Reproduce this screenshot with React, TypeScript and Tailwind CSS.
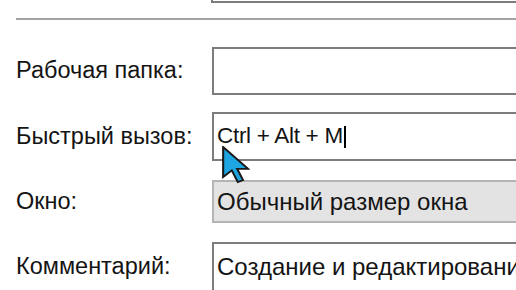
import React from 'react';

const font = { fontFamily: '"Liberation Sans", Arial, sans-serif' };

const Row: React.FC<{ label: string; mt: string; h: string; muted?: boolean; children?: React.ReactNode }> = ({
  label,
  mt,
  h,
  muted,
  children,
}) => (
  <div className={`flex items-center ${mt}`}>
    <div className="w-[212px] shrink-0 pl-[16px] text-[23.5px] text-[#141414] leading-none">{label}</div>
    <div
      className={`${h} w-[340px] shrink-0 border-2 flex items-center pl-[3px] text-[24px] text-[#141414] whitespace-nowrap overflow-hidden leading-none ${
        muted ? 'bg-[#e3e3e3] border-[#b4b4b4]' : 'bg-white border-[#7d7d7d]'
      }`}
    >
      {children}
    </div>
  </div>
);

const Cursor = () => (
  <svg
    className="absolute left-[222px] top-[146px]"
    width="28"
    height="38"
    viewBox="0 0 12 19"
    preserveAspectRatio="none"
  >
    <path
      d="M0.5 0.5 L0.5 15.5 L4.2 12.2 L6.8 18 L9 17 L6.5 11.4 L11.2 11.4 Z"
      fill="#1ea6e3"
      stroke="#1a1a1a"
      strokeWidth="0.9"
      strokeLinejoin="miter"
    />
  </svg>
);

export default function App() {
  return (
    <div className="relative w-[516px] h-[290px] overflow-hidden bg-white" style={font}>
      <div className="ml-[211px] mt-[-10px] h-[13px] border-l-2 border-b-2 border-[#7d7d7d]" />
      <div className="ml-[16px] mt-[15px] h-[2px] bg-[#a3a3a3]" />
      <Row label="Рабочая папка:" mt="mt-[27px]" h="h-[48px]" />
      <Row label="Быстрый вызов:" mt="mt-[17px]" h="h-[49px]">
        <span className="text-[22.5px] tracking-[-0.3px]">Ctrl + Alt + M</span>
        <span className="inline-block w-[2px] h-[22px] bg-black ml-[1px]" />
      </Row>
      <Row label="Окно:" mt="mt-[19px]" h="h-[43px]" muted>
        Обычный размер окна
      </Row>
      <Row label="Комментарий:" mt="mt-[19px]" h="h-[50px]">
        Создание и редактирование
      </Row>
      <Cursor />
    </div>
  );
}
